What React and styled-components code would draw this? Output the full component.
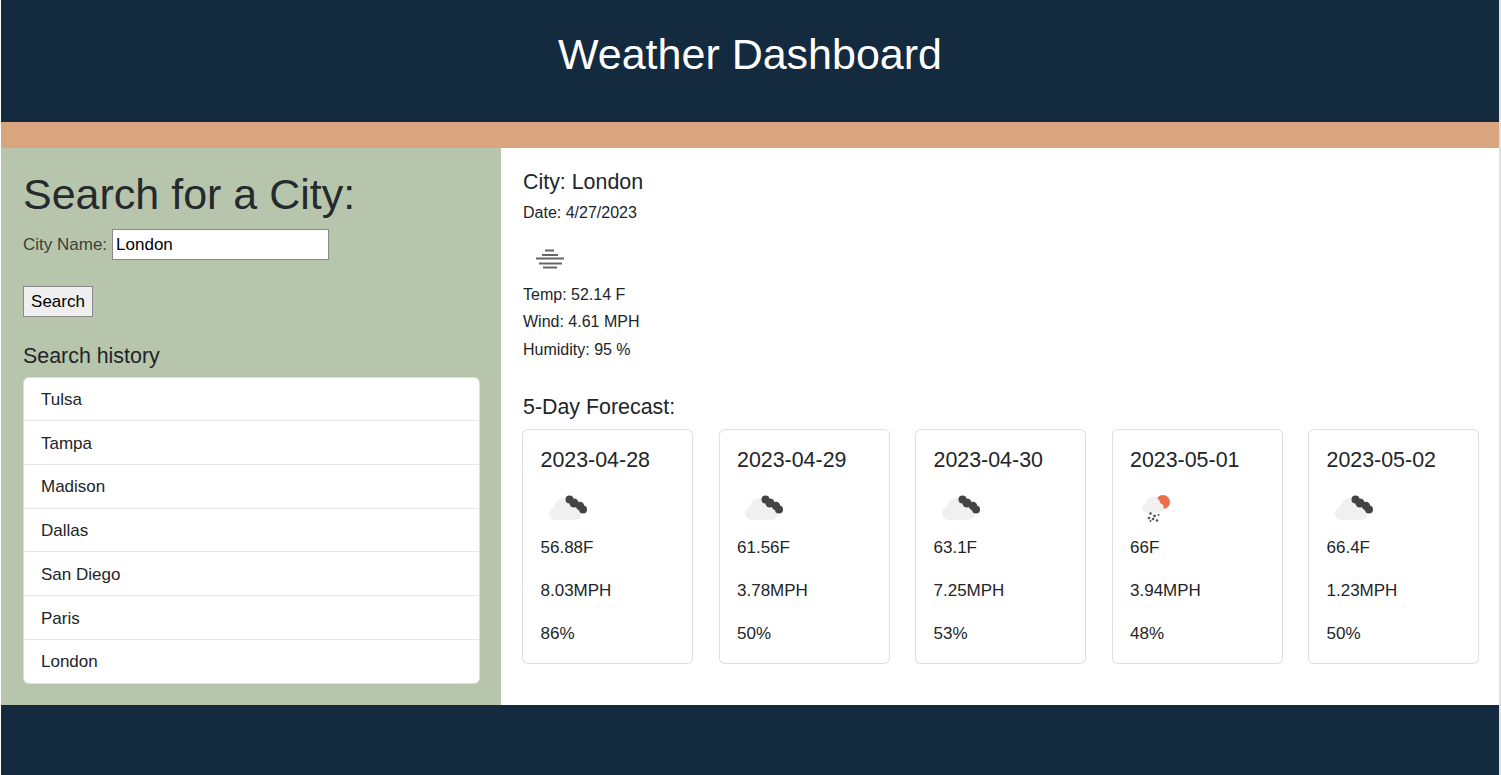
import React from 'react';
import styled, { createGlobalStyle } from 'styled-components';

const Global = createGlobalStyle`
  * { box-sizing: border-box; }
  html, body { margin: 0; padding: 0; background: #fff; }
  body {
    font-family: "Liberation Sans", Arial, sans-serif;
    font-size: 17px;
    line-height: 1.5;
    color: #212529;
  }
`;

const Page = styled.div`
  height: 775px;
  padding: 0 2px 0 1px;
  display: flex;
  flex-direction: column;
  overflow: hidden;
  background: linear-gradient(to right, #fff 1499px, #e0e0e0 1499px);
`;

const Header = styled.header`
  height: 122px;
  flex: none;
  background: #132a3f;
  color: #fff;
  display: flex;
  align-items: center;
  justify-content: center;
`;

const Title = styled.h1`
  margin: 0 0 13px;
  font-size: 43px;
  font-weight: 400;
  line-height: 1.2;
`;

const Stripe = styled.div`
  height: 26px;
  flex: none;
  background: #d9a57f;
`;

const Content = styled.div`
  height: 557px;
  flex: none;
  display: flex;
`;

const Sidebar = styled.aside`
  width: 500px;
  flex: none;
  padding: 21px 21px 0 22px;
  background: #b8c5ad;
`;

const SideTitle = styled.h2`
  margin: 0 0 8.4px;
  font-size: 43px;
  font-weight: 400;
  line-height: 1.2;
  color: #252a2d;
`;

const Label = styled.label`
  display: flex;
  align-items: center;
  gap: 5px;
  height: 31px;
  color: #3c4238;
`;

const CityInput = styled.input`
  width: 217px;
  height: 31px;
  padding: 2px 3px 0;
  border: 1px solid #8a8a8a;
  border-radius: 0;
  background: #fff;
  color: #000;
  font: 17px "Liberation Sans", Arial, sans-serif;
`;

const SearchButton = styled.button`
  display: block;
  margin-top: 26px;
  width: 70px;
  height: 31px;
  padding: 2px 0 0;
  background: #efefef;
  border: 1px solid #8a8a8a;
  border-radius: 0;
  color: #000;
  font: 17px "Liberation Sans", Arial, sans-serif;
`;

const HistoryTitle = styled.h3`
  margin: 27px 0 7px;
  font-size: 21.4px;
  font-weight: 400;
  line-height: 1.2;
`;

const HistoryList = styled.ul`
  margin: 0;
  padding: 0;
  list-style: none;
  background: #fff;
  border: 1px solid rgba(0, 0, 0, 0.125);
  border-radius: 6px;
`;

const HistoryItem = styled.li`
  padding: 10.4px 17px 8.4px;
  height: 43.7px;
  line-height: 24px;
  border-bottom: 1px solid rgba(0, 0, 0, 0.1);
  &:last-child { border-bottom: 0; }
`;

const Main = styled.main`
  flex: 1;
  min-width: 0;
  padding: 22px 20px 0 22px;
`;

const CityTitle = styled.h4`
  margin: 0 0 5.3px;
  font-size: 21.4px;
  font-weight: 400;
  line-height: 1.2;
`;

const Stat = styled.p`
  margin: 0 0 3.5px;
  font-size: 16px;
  line-height: 24px;
`;

const IconSlot = styled.div`
  height: 54.5px;
  svg { display: block; filter: blur(0.5px); }
`;

const ForecastTitle = styled.h4`
  margin: 33.5px 0 8.3px;
  font-size: 21.4px;
  font-weight: 400;
  line-height: 1.2;
`;

const Cards = styled.div`
  display: flex;
  justify-content: space-between;
  margin-left: -1px;
`;

const Card = styled.div`
  width: 171px;
  height: 235px;
  padding: 18px 17.5px 0;
  background: #fff;
  border: 1px solid rgba(0, 0, 0, 0.125);
  border-radius: 6px;
`;

const CardDate = styled.h5`
  margin: 0;
  font-size: 21.4px;
  font-weight: 400;
  line-height: 1.2;
`;

const CardIcon = styled.div`
  height: 62px;
  svg { display: block; filter: blur(0.5px); }
`;

const CardLine = styled.p`
  margin: 0 0 19px;
  line-height: 24px;
`;

const Footer = styled.footer`
  flex: 1;
  background: #132a3f;
`;

const MistIcon = () => (
  <svg width="54" height="50" viewBox="0 0 54 50" fill="none" stroke="#666" strokeWidth="2">
    <path d="M22 22.5h9M19 27h16M13 30.5h28M16 35.5h23M20 39.5h14" />
  </svg>
);

const CloudIcon = () => (
  <svg width="50" height="50" viewBox="0 2 50 50">
    <g fill="#f0f0f0">
      <circle cx="14.5" cy="41.5" r="6.5" />
      <circle cx="23" cy="36" r="10" />
      <circle cx="34" cy="41" r="7" />
      <rect x="14.5" y="40" width="20" height="8" />
    </g>
    <g fill="#444">
      <circle cx="28.5" cy="27.5" r="4" />
      <circle cx="33" cy="31" r="4.6" />
      <circle cx="39" cy="34" r="4.2" />
      <circle cx="42" cy="37.5" r="4" />
    </g>
  </svg>
);

const RainSunIcon = () => (
  <svg width="50" height="50" viewBox="0 2 50 50">
    <circle cx="33" cy="30" r="7" fill="#ec6e4c" />
    <g fill="#f1f1f1">
      <circle cx="17" cy="36" r="4.6" />
      <circle cx="23" cy="32.5" r="7.5" />
      <circle cx="29" cy="36" r="4.8" />
      <rect x="17" y="35" width="12" height="5.8" />
    </g>
    <g fill="#555">
      <circle cx="20.5" cy="41.5" r="1.3" />
      <circle cx="24.5" cy="44" r="1.4" />
      <circle cx="28.5" cy="43" r="1" />
      <circle cx="19" cy="46" r="1.3" />
      <circle cx="23" cy="47" r="1.3" />
      <circle cx="20.5" cy="49" r="1" />
      <circle cx="27" cy="48.5" r="1.3" />
    </g>
  </svg>
);

const history = ['Tulsa', 'Tampa', 'Madison', 'Dallas', 'San Diego', 'Paris', 'London'];

const forecast = [
  { date: '2023-04-28', temp: '56.88F', wind: '8.03MPH', humidity: '86%', Icon: CloudIcon },
  { date: '2023-04-29', temp: '61.56F', wind: '3.78MPH', humidity: '50%', Icon: CloudIcon },
  { date: '2023-04-30', temp: '63.1F', wind: '7.25MPH', humidity: '53%', Icon: CloudIcon },
  { date: '2023-05-01', temp: '66F', wind: '3.94MPH', humidity: '48%', Icon: RainSunIcon },
  { date: '2023-05-02', temp: '66.4F', wind: '1.23MPH', humidity: '50%', Icon: CloudIcon },
];

const App = () => (
  <>
    <Global />
    <Page>
      <Header><Title>Weather Dashboard</Title></Header>
      <Stripe />
      <Content>
        <Sidebar>
          <SideTitle>Search for a City:</SideTitle>
          <Label>
            City Name:
            <CityInput defaultValue="London" />
          </Label>
          <SearchButton>Search</SearchButton>
          <HistoryTitle>Search history</HistoryTitle>
          <HistoryList>
            {history.map(city => <HistoryItem key={city}>{city}</HistoryItem>)}
          </HistoryList>
        </Sidebar>
        <Main>
          <CityTitle>City: London</CityTitle>
          <Stat>Date: 4/27/2023</Stat>
          <IconSlot><MistIcon /></IconSlot>
          <Stat>Temp: 52.14 F</Stat>
          <Stat>Wind: 4.61 MPH</Stat>
          <Stat>Humidity: 95 %</Stat>
          <ForecastTitle>5-Day Forecast:</ForecastTitle>
          <Cards>
            {forecast.map(({ date, temp, wind, humidity, Icon }) => (
              <Card key={date}>
                <CardDate>{date}</CardDate>
                <CardIcon><Icon /></CardIcon>
                <CardLine>{temp}</CardLine>
                <CardLine>{wind}</CardLine>
                <CardLine>{humidity}</CardLine>
              </Card>
            ))}
          </Cards>
        </Main>
      </Content>
      <Footer />
    </Page>
  </>
);

export default App;
